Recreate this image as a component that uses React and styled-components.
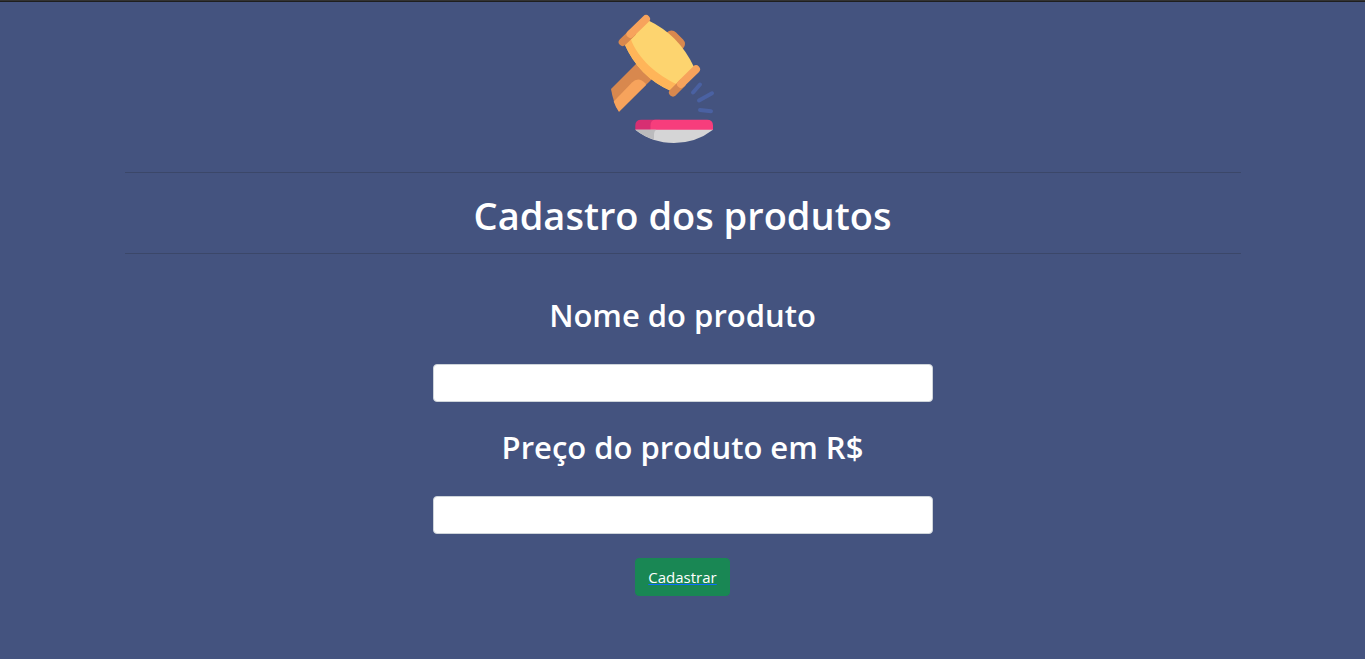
import React from "react";
import styled, { createGlobalStyle } from "styled-components";

const GlobalStyle = createGlobalStyle`
  *, *::before, *::after { box-sizing: border-box; }
  body {
    margin: 0;
    min-height: 100vh;
    background: #44537f;
    color: #fff;
    font-family: "Segoe UI", "Open Sans", "Noto Sans", sans-serif;
    font-size: 15px;
    line-height: 24px;
  }
`;

const Page = styled.div`
  border-top: 1px solid #333;
`;

const TopEdge = styled.div`
  height: 1px;
  background: #1f1f1f;
`;

const Container = styled.main`
  max-width: 1140px;
  margin: 0 auto;
  padding: 12px 12px 24px;
`;

const Logo = styled.svg`
  display: block;
  width: 144px;
  height: 130px;
  margin: 0 auto 28px;
`;

const Rule = styled.hr`
  height: 1px;
  margin: 0;
  border: 0;
  background: #212529;
  opacity: 0.25;
`;

const Title = styled.h1`
  margin: 0;
  padding: 18px 0 14px;
  font-size: 38px;
  line-height: 48px;
  font-weight: 600;
  text-align: center;
`;

const Form = styled.form`
  display: flex;
  flex-direction: column;
  align-items: center;
  gap: 24px;
  padding-top: 40px;
`;

const Field = styled.div`
  display: flex;
  flex-direction: column;
  align-items: center;
  gap: 28px;
  width: 100%;
  max-width: 500px;
`;

const Label = styled.label`
  font-size: 31px;
  line-height: 42px;
  font-weight: 600;
  text-align: center;
`;

const Input = styled.input`
  width: 100%;
  height: 38px;
  padding: 6px 12px;
  border: 1px solid #ced4da;
  border-radius: 4px;
  background: #fff;
  color: #212529;
  font: inherit;
`;

const SubmitButton = styled.button`
  padding: 6px 12px;
  border: 1px solid #198754;
  border-radius: 4px;
  background: #198754;
  color: #fff;
  font: inherit;
  text-decoration: underline #0d6efd;
  text-decoration-skip-ink: none;
  cursor: pointer;
`;

function GavelLogo() {
  return (
    <Logo viewBox="611 14 144 130" role="img" aria-label="Leilão" overflow="visible">
      <path d="M671.5 37L678.5 44" stroke="#d8884e" strokeWidth="13" strokeLinecap="round" />
      <path d="M637 63L611 89Q613 102 619 111.7L653 78Z" fill="#d8884e" />
      <path d="M613.7 101.5L632 82.5Q638.5 76 645.5 83.5L646 85L619 111.7Q615.5 107 613.7 101.5Z" fill="#f7a35c" />
      <path d="M648.5 20.5Q679 35 694 67L671 91Q639 77 624.5 44Z" fill="#fdd46f" />
      <path d="M630.5 38.5C638 59 657 75 677.5 84.5L671 91Q639 77 624.5 44Z" fill="#ffb559" />
      <g strokeWidth="8" strokeLinecap="round">
        <path d="M622.7 42L632 33" stroke="#d8884e" />
        <path d="M630.5 34L646 19" stroke="#f7a35c" />
        <path d="M673 92.5L682 83.5" stroke="#d8884e" />
        <path d="M681 84L696 69.3" stroke="#f7a35c" />
      </g>
      <g stroke="#4a61a2" strokeWidth="4" strokeLinecap="round">
        <path d="M693 92.5L700 84.5" />
        <path d="M699 100.5L712 93.3" />
        <path d="M700 110L711 111.3" />
      </g>
      <path d="M635.3 130V125.5Q635.3 119.7 641.3 119.7H660V130Z" fill="#d72f72" />
      <path d="M650.5 130V125.5Q650.5 119.7 655.5 119.7H707Q713 119.7 713 125.5V130Z" fill="#f73d7c" />
      <path d="M635.3 129.8H713Q696 143 674 143T635.3 129.8Z" fill="#d5d5d6" />
      <path d="M635.3 129.8H656Q654 131.5 654 134V139.6Q644 136.5 635.3 129.8Z" fill="#bbbbbd" />
    </Logo>
  );
}

export default function App() {
  return (
    <>
      <GlobalStyle />
      <Page>
        <TopEdge />
        <Container>
          <GavelLogo />
          <Rule />
          <Title>Cadastro dos produtos</Title>
          <Rule />
          <Form onSubmit={(event) => event.preventDefault()}>
            <Field>
              <Label htmlFor="nome">Nome do produto</Label>
              <Input id="nome" name="nome" type="text" />
            </Field>
            <Field>
              <Label htmlFor="preco">Preço do produto em R$</Label>
              <Input id="preco" name="preco" type="text" />
            </Field>
            <SubmitButton type="submit">Cadastrar</SubmitButton>
          </Form>
        </Container>
      </Page>
    </>
  );
}
